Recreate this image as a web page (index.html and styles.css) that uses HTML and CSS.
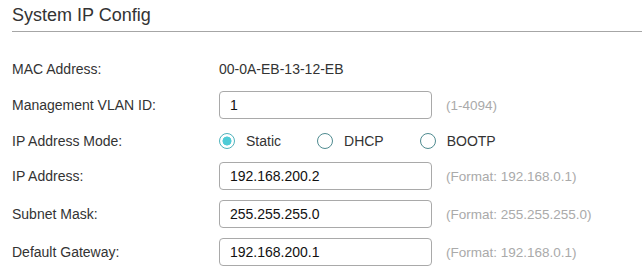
FILE: index.html
```html
<!DOCTYPE html>
<html lang="en">
<head>
  <meta charset="UTF-8">
  <title>System IP Config</title>
  <link rel="stylesheet" href="styles.css">
</head>
<body>
  <div class="panel">
    <h1 class="title">System IP Config</h1>

    <div class="row row-text">
      <span class="label">MAC Address:</span>
      <span class="value">00-0A-EB-13-12-EB</span>
    </div>

    <div class="row">
      <label class="label" for="vlan">Management VLAN ID:</label>
      <input class="field" type="text" id="vlan" value="1">
      <span class="hint">(1-4094)</span>
    </div>

    <div class="row row-radio">
      <span class="label">IP Address Mode:</span>
      <label class="option"><span class="radio checked"></span>Static</label>
      <label class="option"><span class="radio"></span>DHCP</label>
      <label class="option"><span class="radio"></span>BOOTP</label>
    </div>

    <div class="row">
      <label class="label" for="ip">IP Address:</label>
      <input class="field" type="text" id="ip" value="192.168.200.2">
      <span class="hint">(Format: 192.168.0.1)</span>
    </div>

    <div class="row">
      <label class="label" for="mask">Subnet Mask:</label>
      <input class="field" type="text" id="mask" value="255.255.255.0">
      <span class="hint">(Format: 255.255.255.0)</span>
    </div>

    <div class="row">
      <label class="label" for="gw">Default Gateway:</label>
      <input class="field" type="text" id="gw" value="192.168.200.1">
      <span class="hint">(Format: 192.168.0.1)</span>
    </div>
  </div>
</body>
</html>
```

FILE: styles.css
```css
body {
  margin: 0;
  font-family: "Liberation Sans", Arial, sans-serif;
  font-size: 14px;
  color: #333;
  background: #fff;
}
.panel {
  padding-left: 12px;
}
.title {
  margin: 4px 0 0;
  padding-bottom: 5px;
  font-size: 18px;
  font-weight: normal;
  line-height: 22px;
  color: #333;
  border-bottom: 1px solid #a6a6a6;
}
.row {
  display: flex;
  align-items: center;
  height: 38px;
}
.row-text {
  margin-top: 20px;
  height: 34px;
}
.row-radio {
  height: 33px;
}
.label {
  width: 207px;
  flex-shrink: 0;
}
.value {
  color: #333;
}
.field {
  box-sizing: border-box;
  width: 213px;
  height: 28px;
  margin: 0;
  padding: 0 10px;
  border: 1px solid #a9a9a9;
  border-radius: 4px;
  font-family: inherit;
  font-size: 14px;
  color: #111;
  outline: none;
}
.hint {
  margin-left: 14px;
  font-size: 13.5px;
  color: #aaa;
}
.option {
  display: flex;
  align-items: center;
  margin-right: 36px;
}
.radio {
  box-sizing: border-box;
  width: 16px;
  height: 16px;
  margin: 0 11px 0 0;
  border: 1.5px solid #4f8b90;
  border-radius: 50%;
  background: #fff;
}
.radio.checked {
  border-color: #4fb3bc;
  background: radial-gradient(circle, #4ecbd6 0 4.2px, #fff 4.8px);
}
```
